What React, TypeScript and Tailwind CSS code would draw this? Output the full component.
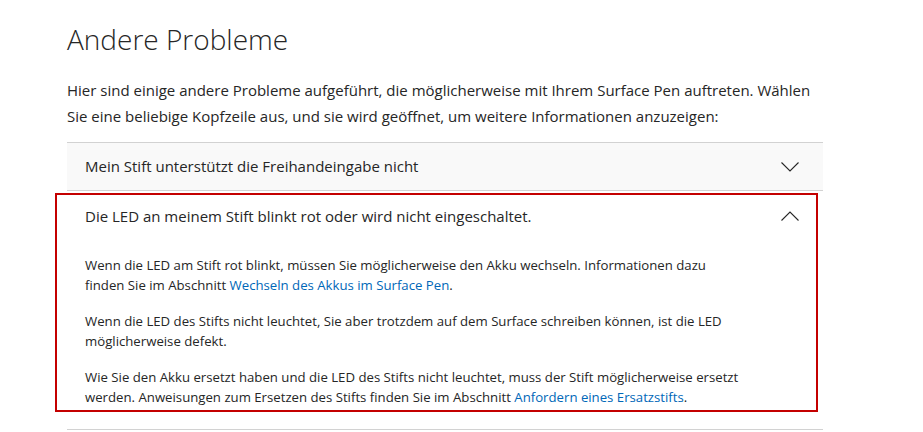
import React from "react";

const Chevron = ({ up }: { up?: boolean }) => (
  <svg width="18" height="10" viewBox="0 0 18 10" className="shrink-0">
    <path
      d={up ? "M0.5 9.5 L9 1 L17.5 9.5" : "M0.5 0.5 L9 9 L17.5 0.5"}
      fill="none"
      stroke="#262626"
      strokeWidth="1.1"
    />
  </svg>
);

const Link = ({ children }: { children: React.ReactNode }) => (
  <a href="#" className="text-[#0067b8]">
    {children}
  </a>
);

const App = () => {
  return (
    <main className="min-h-screen bg-white pl-[67px] pr-[100px] text-[#262626] font-['Open_Sans',sans-serif]">
      <h2 className="pt-[19px] text-[28px] leading-[40px] font-light">Andere Probleme</h2>
      <p className="mt-[18px] text-[15px] leading-[26px] whitespace-nowrap">
        Hier sind einige andere Probleme aufgeführt, die möglicherweise mit Ihrem Surface Pen auftreten. Wählen
        <br />
        Sie eine beliebige Kopfzeile aus, und sie wird geöffnet, um weitere Informationen anzuzeigen:
      </p>

      <div className="mt-[13px] border-t border-[#d2d2d2]">
        <div className="flex h-[48px] items-center justify-between border-b border-[#d2d2d2] bg-[#f9f9f9] pl-[18px] pr-[24px]">
          <span className="text-[15px]">Mein Stift unterstützt die Freihandeingabe nicht</span>
          <Chevron />
        </div>

        <div className="mt-[2px] -ml-[12px] mr-[5px] border-2 border-[#c40000] pl-[28px] pr-[17px] pt-[9px] pb-[3px]">
          <div className="flex h-[24px] items-center justify-between">
            <span className="text-[15px]">Die LED an meinem Stift blinkt rot oder wird nicht eingeschaltet.</span>
            <Chevron up />
          </div>
          <div className="mt-[27px] flex flex-col gap-[16px] text-[13.2px] leading-[20px] whitespace-nowrap">
            <p>
              Wenn die LED am Stift rot blinkt, müssen Sie möglicherweise den Akku wechseln. Informationen dazu
              <br />
              finden Sie im Abschnitt <Link>Wechseln des Akkus im Surface Pen</Link>.
            </p>
            <p>
              Wenn die LED des Stifts nicht leuchtet, Sie aber trotzdem auf dem Surface schreiben können, ist die LED
              <br />
              möglicherweise defekt.
            </p>
            <p>
              Wie Sie den Akku ersetzt haben und die LED des Stifts nicht leuchtet, muss der Stift möglicherweise ersetzt
              <br />
              werden. Anweisungen zum Ersetzen des Stifts finden Sie im Abschnitt <Link>Anfordern eines Ersatzstifts</Link>.
            </p>
          </div>
        </div>

        <div className="mt-[17px] border-t border-[#d2d2d2]" />
      </div>
    </main>
  );
};

export default App;
